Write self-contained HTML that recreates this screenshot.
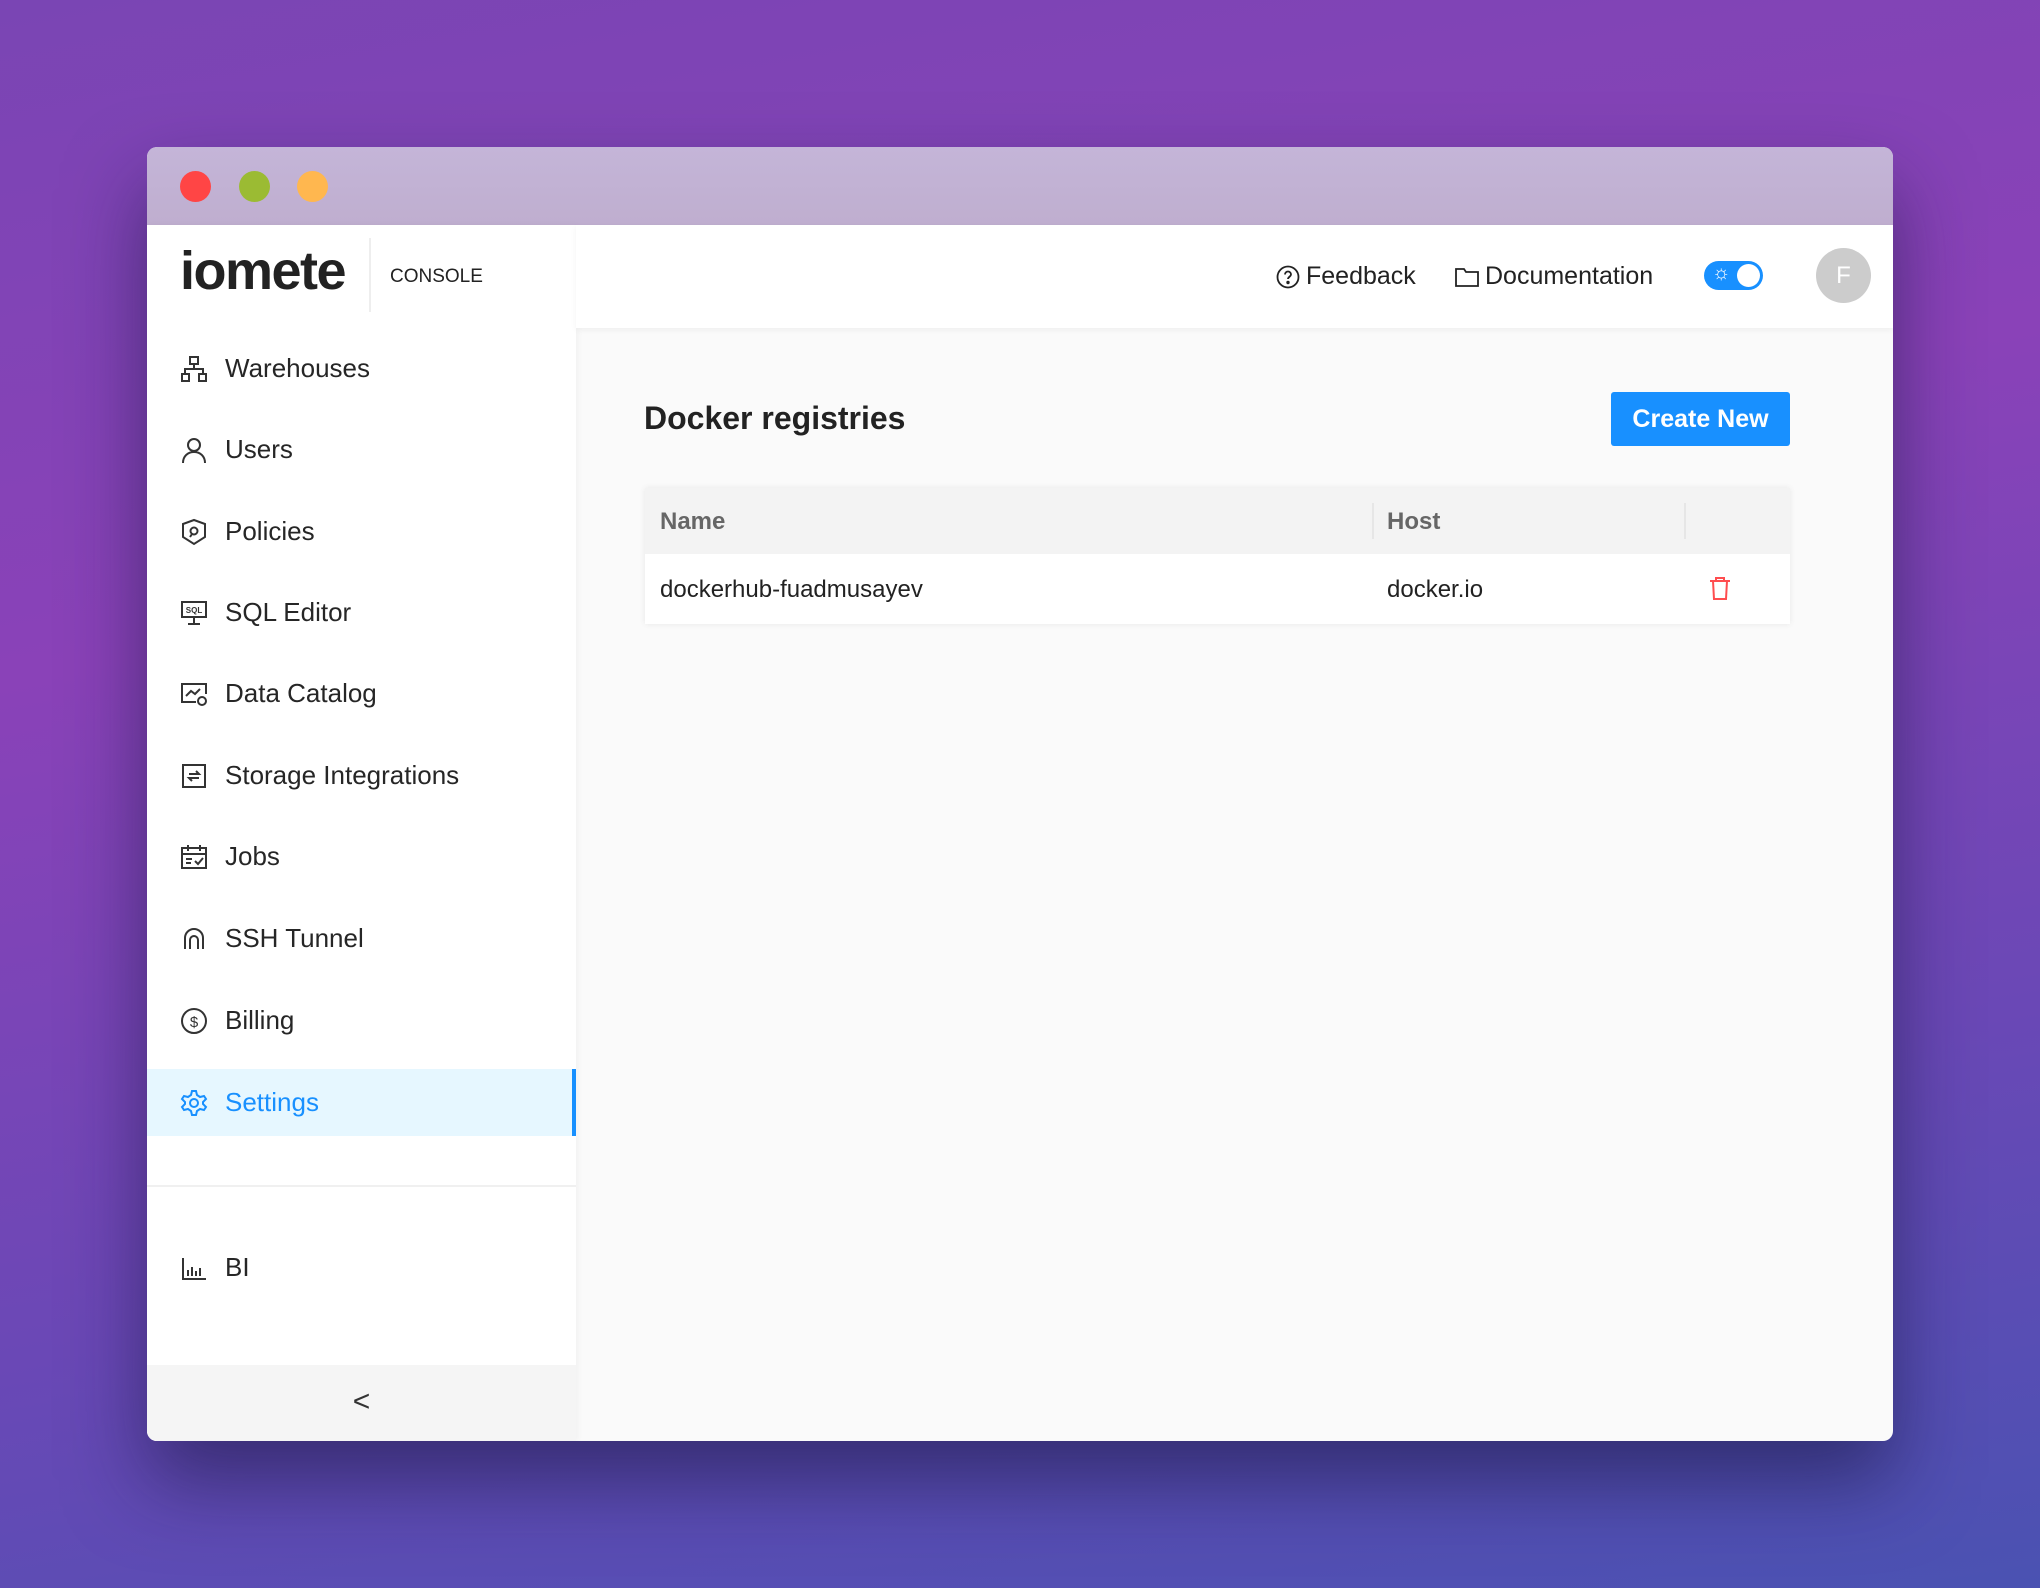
<!DOCTYPE html>
<html><head><meta charset="utf-8"><style>
*{box-sizing:border-box;margin:0;padding:0}
body{width:2040px;height:1588px;overflow:hidden;font-family:"Liberation Sans",Arial,sans-serif;color:#262626;
background:linear-gradient(170deg,#7a45b4 0%,#8a42b8 35%,#6a48b6 70%,#4a52b2 100%);position:relative}
.win{position:absolute;left:147px;top:147px;width:1746px;height:1294px;border-radius:10px;overflow:hidden;background:#fafafa;box-shadow:0 40px 80px rgba(20,20,60,.55)}
.tb{height:78px;background:linear-gradient(#c4b5d8,#bfaecf)}
.dot{position:absolute;top:171px;width:31px;height:31px;border-radius:50%}
.side{position:absolute;left:0;top:78px;width:429px;bottom:0;background:#fff;box-shadow:2px 0 6px rgba(0,0,0,.04)}
.logo{position:absolute;left:33px;top:15px;font-size:54px;font-weight:bold;letter-spacing:-1.5px;color:#222}
.vd{position:absolute;left:222px;top:13px;width:2px;height:74px;background:#eee}
.con{position:absolute;left:243px;top:41px;font-size:19px;color:#222}
.nav{position:absolute;left:0;width:429px;height:67px;display:flex;align-items:center;font-size:26px}
.nav svg{position:absolute;left:33px;width:28px;height:28px}
.nav span{position:absolute;left:78px}
.act{background:#e6f7ff;color:#1890ff;border-right:4px solid #1890ff}
.coll{position:absolute;left:0;right:0;bottom:0;height:76px;background:#f5f5f5;text-align:center;font-size:30px;line-height:74px;color:#333}
.hdr{position:absolute;left:429px;right:0;top:78px;height:103px;background:#fff;box-shadow:0 2px 6px rgba(0,0,0,.05)}
.hl{position:absolute;top:0;height:103px;display:flex;align-items:center;font-size:25px;color:#222}
h1{position:absolute;left:497px;top:253px;font-size:32px;font-weight:bold;color:#222}
.btn{position:absolute;left:1464px;top:245px;width:179px;height:54px;background:#1890ff;color:#fff;font-size:25px;font-weight:bold;text-align:center;line-height:54px;border-radius:3px}
.tbl{position:absolute;left:498px;top:341px;width:1145px;height:136px;background:#fff;box-shadow:0 0 6px rgba(0,0,0,.08)}
.th{height:66px;background:#f3f3f3;position:relative;font-size:24px;color:#666;font-weight:bold}
.td{position:relative;height:70px;font-size:24px;color:#222}
</style></head><body>
<div class="win">
<div class="tb"></div>
<div class="side">
 <div class="logo">iomete</div><div class="vd"></div><div class="con">CONSOLE</div>
 <div class="nav" style="top:110px"><svg viewBox="0 0 28 28" fill="none" stroke="#333" stroke-width="2"><rect x="10" y="2" width="8" height="7"/><rect x="2" y="19" width="7" height="7"/><rect x="19" y="19" width="7" height="7"/><path d="M14 9v5M5 19v-5h18v5"/></svg><span>Warehouses</span></div>
 <div class="nav" style="top:191px"><svg viewBox="0 0 28 28" fill="none" stroke="#333" stroke-width="2"><circle cx="14" cy="9" r="6"/><path d="M3 27c0-7 5-11 11-11s11 4 11 11"/></svg><span>Users</span></div>
 <div class="nav" style="top:273px"><svg viewBox="0 0 28 28" fill="none" stroke="#333" stroke-width="2"><path d="M14 2l11 4v13l-11 7-11-7V6z"/><circle cx="14" cy="13" r="3.5"/><path d="M12 16l-2 3"/></svg><span>Policies</span></div>
 <div class="nav" style="top:354px"><svg viewBox="0 0 28 28" fill="none" stroke="#333" stroke-width="2"><rect x="2" y="3" width="24" height="15"/><path d="M14 18v6M8 25h12"/><text x="14" y="14" font-size="8" text-anchor="middle" fill="#333" stroke="none" font-weight="bold">SQL</text></svg><span>SQL Editor</span></div>
 <div class="nav" style="top:435px"><svg viewBox="0 0 28 28" fill="none" stroke="#333" stroke-width="2"><path d="M16 22H2V4h24v10"/><path d="M6 16l5-5 4 3 5-5"/><circle cx="22" cy="21" r="4"/></svg><span>Data Catalog</span></div>
 <div class="nav" style="top:517px"><svg viewBox="0 0 28 28" fill="none" stroke="#333" stroke-width="2"><rect x="3" y="3" width="22" height="22"/><path d="M9 12h10l-3-3M19 16H9l3 3"/></svg><span>Storage Integrations</span></div>
 <div class="nav" style="top:598px"><svg viewBox="0 0 28 28" fill="none" stroke="#333" stroke-width="2"><rect x="2" y="5" width="24" height="20"/><path d="M2 11h24M8 2v6M20 2v6M6 16h6M6 20h5M15 18l3 3 5-6"/></svg><span>Jobs</span></div>
 <div class="nav" style="top:680px"><svg viewBox="0 0 28 28" fill="none" stroke="#333" stroke-width="2"><path d="M5 24V13a9 9 0 0118 0v11M10 24v-9a4 4 0 018 0v9"/></svg><span>SSH Tunnel</span></div>
 <div class="nav" style="top:762px"><svg viewBox="0 0 28 28" fill="none" stroke="#333" stroke-width="2"><circle cx="14" cy="14" r="12"/><text x="14" y="20" font-size="15" text-anchor="middle" fill="#333" stroke="none">$</text></svg><span>Billing</span></div>
 <div class="nav act" style="top:844px;height:67px"><svg viewBox="0 0 28 28" fill="none" stroke="#1890ff" stroke-width="2"><circle cx="14" cy="14" r="4"/><path d="M12 2h4l1 4 3 2 4-1 2 3-3 3v2l3 3-2 3-4-1-3 2-1 4h-4l-1-4-3-2-4 1-2-3 3-3v-2L2 10l2-3 4 1 3-2z"/></svg><span>Settings</span></div>
 <div style="position:absolute;left:0;right:0;top:960px;height:2px;background:#f0f0f0"></div>
 <div class="nav" style="top:1009px"><svg viewBox="0 0 28 28" fill="none" stroke="#333" stroke-width="2"><path d="M3 4v21h23M8 22v-6M12 22v-9M16 22v-5M20 22v-8"/></svg><span>BI</span></div>
 <div class="coll">&lt;</div>
</div>
<div class="hdr">
 <div class="hl" style="left:700px"><svg width="24" height="24" viewBox="0 0 24 24" fill="none" stroke="#222" stroke-width="1.8"><circle cx="12" cy="12" r="10.5"/><path d="M9 9.5a3 3 0 116 0c0 2-3 2.5-3 4.5"/><circle cx="12" cy="17.5" r=".8" fill="#222"/></svg><span style="margin-left:6px">Feedback</span></div>
 <div class="hl" style="left:879px"><svg width="24" height="22" viewBox="0 0 24 22" fill="none" stroke="#222" stroke-width="1.8"><path d="M1 3h8l2 3h12v14H1z"/></svg><span style="margin-left:6px">Documentation</span></div>
 <div style="position:absolute;left:1128px;top:36px;width:59px;height:29px;border-radius:15px;background:#1890ff"><div style="position:absolute;right:3px;top:3px;width:23px;height:23px;border-radius:50%;background:#fff"></div><span style="position:absolute;left:8px;top:1px;color:#fff;font-size:20px">☼</span></div>
 <div style="position:absolute;left:1240px;top:23px;width:55px;height:55px;border-radius:50%;background:#ccc;color:#fff;text-align:center;line-height:55px;font-size:24px">F</div>
</div>
<h1>Docker registries</h1>
<div class="btn">Create New</div>
<div class="tbl">
  <div class="th"><span style="position:absolute;left:15px;top:20px">Name</span><div style="position:absolute;left:727px;top:15px;width:2px;height:36px;background:#e6e6e6"></div><span style="position:absolute;left:742px;top:20px">Host</span><div style="position:absolute;left:1039px;top:15px;width:2px;height:36px;background:#e6e6e6"></div></div>
  <div class="td"><span style="position:absolute;left:15px;top:22px">dockerhub-fuadmusayev</span><span style="position:absolute;left:742px;top:22px">docker.io</span>
  <svg style="position:absolute;left:1064px;top:22px" width="22" height="24" viewBox="0 0 22 24" fill="none" stroke="#ff4d4f" stroke-width="2"><path d="M1 5h20M7 5V2h8v3M4 5l1 18h12l1-18"/></svg></div>
</div>
</div>
<div class="dot" style="left:180px;background:#ff4545"></div>
<div class="dot" style="left:239px;background:#9bbb33"></div>
<div class="dot" style="left:297px;background:#ffb74f"></div>
</body></html>
